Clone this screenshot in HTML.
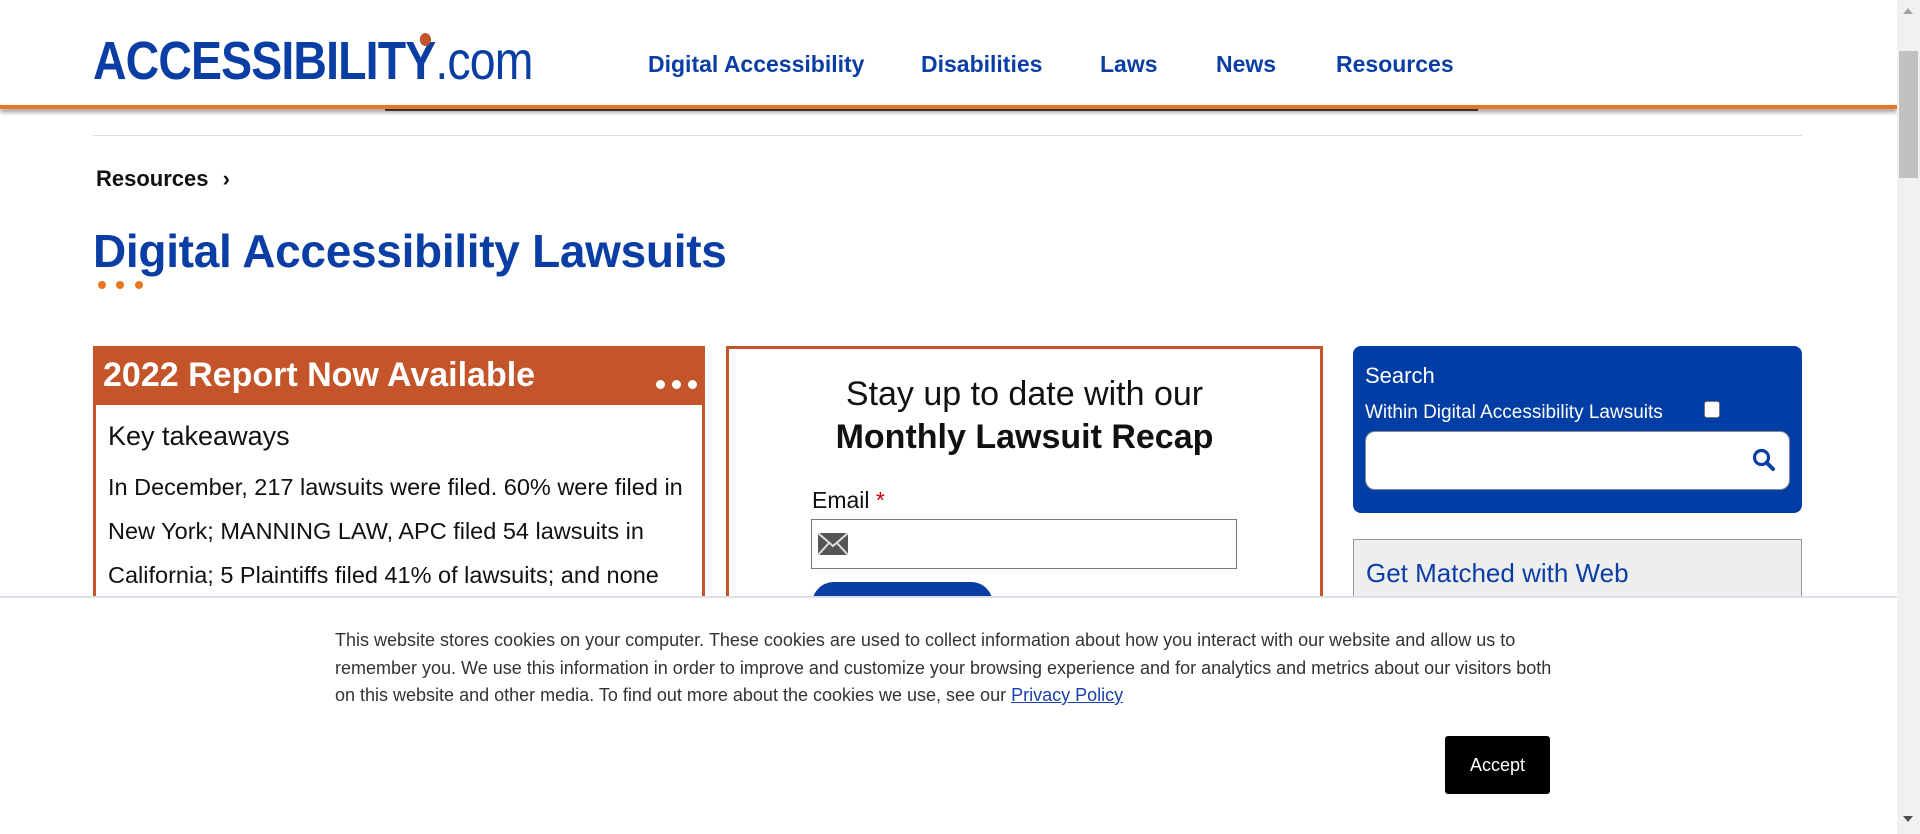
<!DOCTYPE html>
<html><head><meta charset="utf-8"><style>
*{margin:0;padding:0;box-sizing:border-box}
body{width:1920px;height:834px;overflow:hidden;background:#fff;font-family:"Liberation Sans",Arial,sans-serif;position:relative}
.abs{position:absolute}
.blue{color:#0a3ea4}
</style></head><body>
<!-- header -->
<div class="abs" style="left:0;top:0;width:1897px;height:105px;background:#fff"></div>
<div class="abs" style="left:93px;top:30px;font-size:54px;font-weight:bold;color:#0a3ea4;letter-spacing:-1px;transform:scaleX(0.86);transform-origin:left;white-space:nowrap">ACCESSIBILIT<span style="position:relative">Y<span style="position:absolute;left:17px;top:2px;width:13px;height:13px;border-radius:50%;background:#c4552a"></span></span><span style="font-weight:normal;letter-spacing:-1px">.com</span></div>
<div class="abs" style="left:0;top:51px;font-size:23px;font-weight:bold;color:#0a3ea4;white-space:nowrap">
<span class="abs" style="left:648px">Digital Accessibility</span>
<span class="abs" style="left:921px">Disabilities</span>
<span class="abs" style="left:1100px">Laws</span>
<span class="abs" style="left:1216px">News</span>
<span class="abs" style="left:1336px">Resources</span>
</div>
<div class="abs" style="left:0;top:105px;width:1897px;height:4px;background:#e87722;box-shadow:0 3px 4px rgba(0,0,0,.45)"></div>
<div class="abs" style="left:385px;top:109px;width:1093px;height:2px;background:#333"></div>
<div class="abs" style="left:93px;top:135px;width:1709px;height:1px;background:#ddd"></div>
<div class="abs" style="left:96px;top:166px;font-size:22px;font-weight:bold;color:#111">Resources <span style="margin-left:8px">›</span></div>
<div class="abs blue" style="left:93px;top:224px;font-size:46px;font-weight:bold;letter-spacing:-0.3px">Digital Accessibility Lawsuits</div>
<div class="abs" style="left:98px;top:281px;width:8px;height:8px;border-radius:50%;background:#e87722;box-shadow:18px 0 0 #e87722,37px 0 0 #e87722"></div>
<!-- left box -->
<div class="abs" style="left:93px;top:346px;width:612px;height:300px;border:3px solid #c4552a;border-bottom:none"></div>
<div class="abs" style="left:93px;top:346px;width:612px;height:59px;background:#c4552a"></div>
<div class="abs" style="left:103px;top:356px;font-size:34px;font-weight:bold;color:#fff">2022 Report Now Available</div>
<div class="abs" style="left:656px;top:380px;width:9px;height:9px;border-radius:50%;background:#fff;box-shadow:16px 0 0 #fff,32px 0 0 #fff"></div>
<div class="abs" style="left:108px;top:421px;font-size:27px;color:#111">Key takeaways</div>
<div class="abs" style="left:108px;top:465px;width:592px;font-size:23.5px;line-height:44px;color:#111">In December, 217 lawsuits were filed. 60% were filed in New York; MANNING LAW, APC filed 54 lawsuits in California; 5 Plaintiffs filed 41% of lawsuits; and none</div>
<!-- middle -->
<div class="abs" style="left:726px;top:346px;width:597px;height:300px;border:3px solid #c4552a;border-bottom:none"></div>
<div class="abs" style="left:726px;top:373px;width:597px;text-align:center;font-size:34px;line-height:43px;color:#111">Stay up to date with our<br><b>Monthly Lawsuit Recap</b></div>
<div class="abs" style="left:812px;top:487px;font-size:23px;color:#111">Email <span style="color:#c00">*</span></div>
<div class="abs" style="left:811px;top:519px;width:426px;height:50px;border:1px solid #777;background:#fff"></div>
<div class="abs" style="left:818px;top:533px;width:30px;height:22px;background:#555"></div>
<svg class="abs" style="left:818px;top:533px" width="30" height="22"><path d="M0 0L15 13L30 0M0 22L11 10M30 22L19 10" stroke="#ddd" stroke-width="2" fill="none"/></svg>
<div class="abs" style="left:812px;top:582px;width:181px;height:40px;border-radius:22px 22px 0 0;background:#0a3ea4"></div>
<!-- search -->
<div class="abs" style="left:1353px;top:346px;width:449px;height:167px;border-radius:8px;background:#003da5"></div>
<div class="abs" style="left:1365px;top:363px;font-size:22px;color:#fff">Search</div>
<div class="abs" style="left:1365px;top:402px;font-size:19px;color:#fff">Within Digital Accessibility Lawsuits</div>
<div class="abs" style="left:1704px;top:401px;width:16px;height:17px;border-radius:3px;background:#fff;border:1px solid #777"></div>
<div class="abs" style="left:1365px;top:431px;width:425px;height:59px;border-radius:10px;background:#fff;border:1px solid #889"></div>
<svg class="abs" style="left:1752px;top:448px" width="24" height="24"><circle cx="9.5" cy="9.5" r="7" stroke="#0a3ea4" stroke-width="3.2" fill="none"/><path d="M14.5 14.5L21 21" stroke="#0a3ea4" stroke-width="4" stroke-linecap="round"/></svg>
<div class="abs" style="left:1353px;top:539px;width:449px;height:120px;background:#eee;border:1px solid #999"></div>
<div class="abs" style="left:1366px;top:558px;font-size:26px;color:#0a3ea4">Get Matched with Web</div>
<!-- cookie banner -->
<div class="abs" style="left:0;top:596px;width:1897px;height:238px;background:#fff;border-top:2px solid #dde0e8"></div>
<div class="abs" style="left:335px;top:627px;width:1240px;font-size:18px;line-height:27.5px;color:#333">This website stores cookies on your computer. These cookies are used to collect information about how you interact with our website and allow us to remember you. We use this information in order to improve and customize your browsing experience and for analytics and metrics about our visitors both on this website and other media. To find out more about the cookies we use, see our <span style="color:#1a3fa8;text-decoration:underline">Privacy Policy</span></div>
<div class="abs" style="left:1445px;top:736px;width:105px;height:58px;background:#000;border-radius:3px;color:#fff;font-size:18px;text-align:center;line-height:58px">Accept</div>
<!-- scrollbar -->
<div class="abs" style="left:1897px;top:0;width:23px;height:834px;background:#f1f1f1"></div>
<div class="abs" style="left:1899px;top:51px;width:19px;height:127px;background:#c1c1c1"></div>
<div class="abs" style="left:1903px;top:8px;width:0;height:0;border-left:5px solid transparent;border-right:5px solid transparent;border-bottom:6px solid #a3a3a3"></div>
<div class="abs" style="left:1903px;top:816px;width:0;height:0;border-left:5px solid transparent;border-right:5px solid transparent;border-top:6px solid #505050"></div>
</body></html>
